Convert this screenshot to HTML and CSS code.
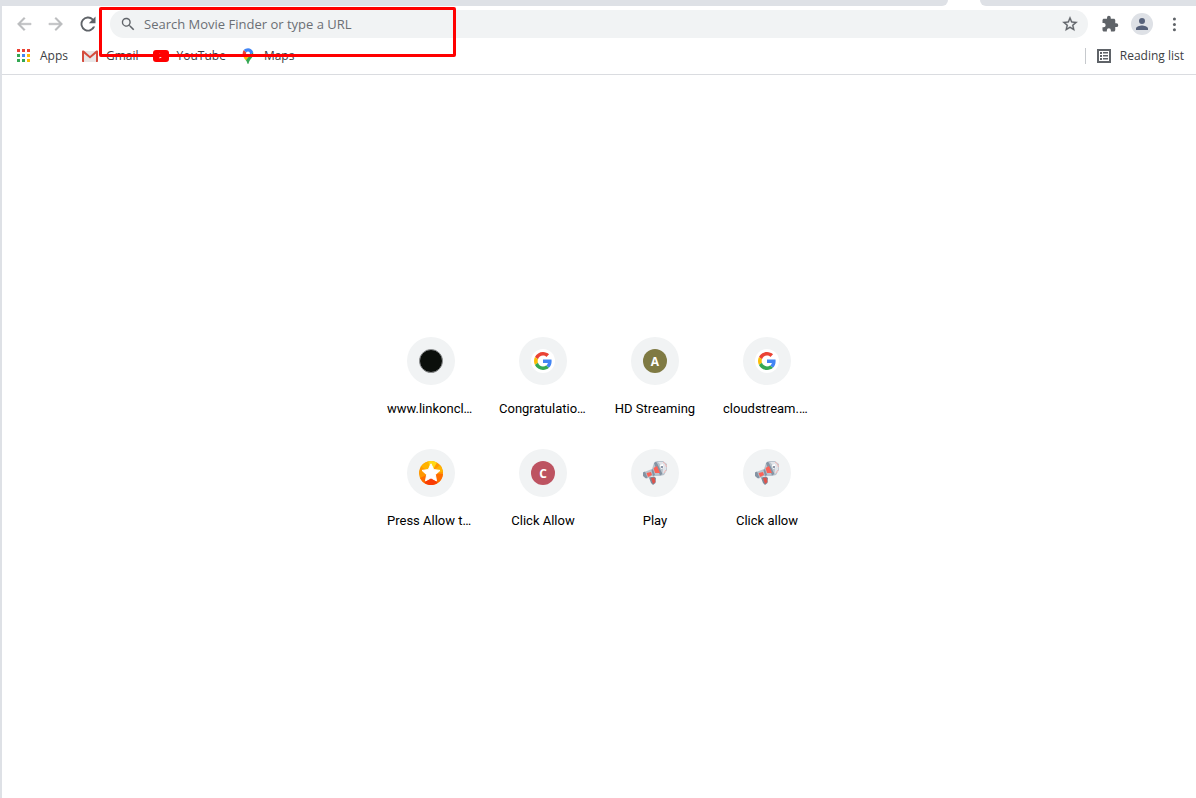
FILE: index.html
```html
<!DOCTYPE html>
<html lang="en">
<head>
<meta charset="utf-8">
<meta name="viewport" content="width=device-width, initial-scale=1">
<title>New Tab</title>
<link rel="stylesheet" href="styles.css">
</head>
<body>
<svg class="defs" aria-hidden="true">
  <symbol id="google" viewBox="0 0 48 48">
    <path fill="#ea4335" d="M24 9.5c3.54 0 6.71 1.22 9.21 3.6l6.85-6.85C35.9 2.38 30.47 0 24 0 14.62 0 6.51 5.38 2.56 13.22l7.98 6.19C12.43 13.72 17.74 9.5 24 9.5z"/>
    <path fill="#4285f4" d="M46.98 24.55c0-1.57-.15-3.09-.38-4.55H24v9.02h12.94c-.58 2.96-2.26 5.48-4.78 7.18l7.73 6c4.51-4.18 7.09-10.36 7.09-17.65z"/>
    <path fill="#fbbc05" d="M10.53 28.59c-.48-1.45-.76-2.99-.76-4.59s.27-3.14.76-4.59l-7.98-6.19C.92 16.46 0 20.12 0 24s.92 7.54 2.56 10.78l7.97-6.19z"/>
    <path fill="#34a853" d="M24 48c6.48 0 11.93-2.13 15.89-5.81l-7.73-6c-2.15 1.45-4.92 2.3-8.16 2.3-6.26 0-11.57-4.22-13.47-9.91l-7.98 6.19C6.51 42.62 14.62 48 24 48z"/>
  </symbol>
  <symbol id="megaphone" viewBox="0 0 24 24">
    <path fill="#b9c3cd" d="M0 11.500 9 8 11 2 14 0 20 0 24 3 24 9 21 14 17 15 9 15 4 17.500 1 16z"/>
    <path fill="#e1e4e9" d="M15 1 21 1 23.500 4 23 11 19.500 13 20 7z"/>
    <path fill="#8493a3" d="M11 2 13 .500 14.500 3 19.500 13 17 14.500 16 12 12 5zM0 11.500 2 10.500 4.500 16.500 3 17.500 0 15zM8.500 9 10 8 12 14 10 15z"/>
    <path fill="#fb6257" d="M10.500 7 14 5 17 12 12 12zM3.500 12 8 11 9 14 5 16z"/>
    <path fill="#7c8c9c" d="M6 16.500 11 15.500 13 17 12.500 22 10 24 8 22z"/>
    <path fill="#e0524a" d="M8 17 11.500 16.500 12.500 21 10 23z"/>
    <path fill="#fff" d="M17 4 20 3 20.500 7 18 8z"/>
    <path fill="none" stroke="#efb4b2" d="M20 1 22.500 3 23.500 6M21 12 23 9"/>
    <path fill="#8f98aa" d="M18 5h2v2h-2z"/>
  </symbol>
</svg>

<header class="chrome">
  <div class="tabstrip"><span class="tabs-before"></span><span class="tabs-after"></span></div>
  <div class="toolbar">
    <button class="tool disabled" aria-label="Back"><svg class="i20" viewBox="0 0 24 24"><path stroke="currentColor" stroke-width=".5" d="M20.500 11H7.830l5.590-5.590L12 4l-8 8 8 8 1.410-1.410L7.830 13H20.500z"/></svg></button>
    <button class="tool disabled" aria-label="Forward"><svg class="i20" viewBox="0 0 24 24"><path stroke="currentColor" stroke-width=".5" d="M12 4l-1.410 1.410L16.170 11H3.500v2h12.670l-5.580 5.590L12 20l8-8z"/></svg></button>
    <button class="tool" aria-label="Reload"><svg class="i20" viewBox="0 0 24 24"><path d="M18.400 5.600A9 9 0 1 0 20.600 15H18a6.700 6.700 0 1 1-1.300-7.700L13 11h8V3z"/></svg></button>
    <div class="omnibox">
      <svg class="i16" viewBox="0 0 24 24"><path d="M15.800 14.100h-.9l-.3-.3a6.800 6.800 0 1 0-.8.800l.3.300v.9l5.600 5.600 1.700-1.700zM9.400 14.100a4.700 4.700 0 1 1 0-9.400 4.700 4.700 0 0 1 0 9.400z"/></svg>
      <input class="query" type="text" aria-label="Address and search bar" placeholder="Search Movie Finder or type a URL">
      <button class="star" aria-label="Bookmark this tab"><svg class="i18" viewBox="0 0 24 24"><path stroke="currentColor" stroke-width=".4" d="M22 9.240l-7.190-.620L12 2 9.190 8.630 2 9.240l5.460 4.730L5.820 21 12 17.270 18.180 21l-1.630-7.030zM12 15.400l-3.760 2.270 1-4.280-3.320-2.880 4.380-.380L12 6.100l1.710 4.040 4.380.380-3.320 2.880 1 4.280z"/></svg></button>
    </div>
    <button class="tool" aria-label="Extensions"><svg class="i18" viewBox="0 0 24 24"><path d="M20.500 11H19V7c0-1.100-.9-2-2-2h-4V3.500a2.500 2.500 0 0 0-5 0V5H4c-1.100 0-2 .9-2 2v3.800h1.500a2.700 2.700 0 0 1 0 5.400H2V20c0 1.100.9 2 2 2h3.800v-1.500a2.700 2.700 0 0 1 5.400 0V22H17c1.100 0 2-.9 2-2v-4h1.500a2.500 2.500 0 0 0 0-5z"/></svg></button>
    <button class="tool" aria-label="Profile"><span class="avatar"><svg class="i18" viewBox="0 0 24 24"><path d="M12 12a4 4 0 1 0 0-8 4 4 0 0 0 0 8zm0 2c-2.670 0-8 1.340-8 4v2h16v-2c0-2.660-5.330-4-8-4z"/></svg></span></button>
    <button class="tool" aria-label="Menu"><svg class="i20" viewBox="0 0 24 24"><circle cx="12.500" cy="6" r="1.800"/><circle cx="12.500" cy="12.500" r="1.800"/><circle cx="12.500" cy="19" r="1.800"/></svg></button>
  </div>
  <nav class="bookmarks">
    <a class="bookmark" href="#"><svg class="i16" viewBox="0 0 16 16"><path fill="#ea4335" d="M1 1h3v3H1zM6 1h3v3H6zM11 1h3v3h-3z"/><path fill="#34a853" d="M1 6h3v3H1zM1 11h3v3H1z"/><path fill="#4285f4" d="M6 6h3v3H6z"/><path fill="#34a853" d="M6 11h3v3H6z"/><path fill="#fbbc05" d="M11 6h3v3h-3zM11 11h3v3h-3z"/></svg>Apps</a>
    <a class="bookmark" href="#"><svg class="i16" viewBox="0 0 16 16"><path fill="#e8e6e6" d="M1 3h14v11H1z"/><path fill="#d54b3d" d="M0 3.500C0 2.500 1 2 2 2.800L8 8l6-5.200c1-.8 2-.3 2 .7V13c0 .6-.4 1-1 1h-1V5.500L8 10.500 2 5.500V14H1c-.6 0-1-.4-1-1z"/></svg>Gmail</a>
    <a class="bookmark" href="#"><svg class="i16" viewBox="0 0 16 16"><rect y="2" width="16" height="12" rx="3" fill="#f00"/><path fill="#fff" d="M6.500 5.500v5L10.500 8z"/></svg>YouTube</a>
    <a class="bookmark" href="#"><svg class="i16" viewBox="0 0 16 16"><path fill="#34a853" d="M13 4c.8 3-.5 5-2 6.800C9.500 12.500 9 14 8.600 15.500c-.2.600-1 .6-1.200 0C7 14 6.500 13 5.700 12z"/><path fill="#fbbc04" d="M3.400 8.500 6.400 5l3.300 2.500-4 4.700C4.600 11 3.900 10 3.400 8.500z"/><path fill="#ea4335" d="M3.800 2 7 4.700 3.400 8.700C2.300 6.500 2.400 4 3.800 2z"/><path fill="#4285f4" d="M3.800 2C6-.5 11.500-1 13.300 4.200L9.500 7.600 6.500 4.500z"/><circle cx="8" cy="5.500" r="2" fill="#fff"/></svg>Maps</a>
    <a class="bookmark reading" href="#"><svg class="i16" viewBox="0 0 16 16"><path fill="#5f6368" fill-rule="evenodd" d="M1 1h14v14H1zM3 3v10h10V3zM4 4h2v2H4zM7 4h5v1.500H7zM4 7h2v2H4zM7 7h5v1.500H7zM4 10h2v2H4zM7 10h5v1.500H7z"/></svg>Reading list</a>
  </nav>
  <div class="highlight"></div>
</header>

<main class="page">
  <div class="tiles">
    <a class="tile" href="#"><span class="disc"><span class="fav black"></span></span><span class="name long">www.linkoncl…</span></a>
    <a class="tile" href="#"><span class="disc"><span class="fav white"><svg class="i18" aria-hidden="true"><use href="#google"/></svg></span></span><span class="name long">Congratulatio…</span></a>
    <a class="tile" href="#"><span class="disc"><span class="fav olive">A</span></span><span class="name">HD Streaming</span></a>
    <a class="tile" href="#"><span class="disc"><span class="fav white"><svg class="i18" aria-hidden="true"><use href="#google"/></svg></span></span><span class="name long">cloudstream.…</span></a>
    <a class="tile" href="#"><span class="disc"><svg class="i24" viewBox="0 0 24 24"><circle cx="12" cy="12" r="12" fill="#ff9800"/><path fill="#ffd814" d="M12 12 9 .4A12 12 0 0 1 18 1.600z"/><path fill="#ffb300" d="M12 12 2 5.400A12 12 0 0 1 9 .4zM12 12 21 4A12 12 0 0 1 24 11z"/><path fill="#ff6d00" d="M12 12 24 13A12 12 0 0 1 17 23zM12 12 1 17A12 12 0 0 0 7 23z"/><path fill="#f93c05" d="M12 12 5.500 22.100A12 12 0 0 0 18.500 22.100z"/><path fill="#fff" stroke="#fff" stroke-linejoin="round" d="M12 2.800l2.700 5.800 6.300.8-4.600 4.300 1.100 6.200-5.500-3-5.500 3 1.100-6.200L3 9.400l6.300-.8z"/></svg></span><span class="name long">Press Allow t…</span></a>
    <a class="tile" href="#"><span class="disc"><span class="fav rose">C</span></span><span class="name">Click Allow</span></a>
    <a class="tile" href="#"><span class="disc"><svg class="i24"><use href="#megaphone"/></svg></span><span class="name">Play</span></a>
    <a class="tile" href="#"><span class="disc"><svg class="i24"><use href="#megaphone"/></svg></span><span class="name">Click allow</span></a>
  </div>
</main>
</body>
</html>
```
FILE: styles.css
```css
* { box-sizing: border-box; }
body {
  margin: 0;
  min-height: 100vh;
  border-left: 2px solid #dee1e6;
  background: #fff;
  color: #202124;
  font-family: "Open Sans", "Noto Sans", sans-serif;
}
a { color: inherit; text-decoration: none; }
button { border: 0; padding: 0; background: none; color: inherit; font: inherit; }
svg { display: block; flex: none; fill: currentColor; }
.defs { display: none; }
.i16 { width: 16px; height: 16px; }
.i18 { width: 18px; height: 18px; }
.i20 { width: 20px; height: 20px; }
.i24 { width: 24px; height: 24px; }

.chrome { position: relative; border-bottom: 1px solid #dadce0; }
.tabstrip { display: flex; gap: 32px; height: 6px; }
.tabs-before { flex: 1; background: #dee1e6; border-bottom-right-radius: 6px; }
.tabs-after { width: 216px; background: #dee1e6; border-bottom-left-radius: 6px; }

.toolbar { display: flex; align-items: center; gap: 4px; padding: 4px 8px; color: #5f6368; }
.tool { display: flex; align-items: center; justify-content: center; width: 28px; height: 28px; }
.disabled { color: #babcbe; }
.omnibox {
  display: flex;
  flex: 1;
  align-items: center;
  gap: 8px;
  height: 28px;
  margin: 0 4px;
  padding: 0 9px 0 10px;
  border-radius: 14px;
  background: #f1f3f4;
}
.query {
  flex: 1;
  min-width: 0;
  padding: 0;
  border: 0;
  outline: 0;
  background: none;
  color: #202124;
  font: 13px/20px "Open Sans", "Noto Sans", sans-serif;
}
.query::placeholder { color: #6b6f74; opacity: 1; }
.avatar {
  display: flex;
  align-items: center;
  justify-content: center;
  width: 22px;
  height: 22px;
  border-radius: 50%;
  background: #dee1e6;
  color: #56617a;
}

.bookmarks {
  display: flex;
  align-items: center;
  gap: 14px;
  height: 32px;
  padding: 0 12px 4px 14px;
  font-size: 12px;
  line-height: 16px;
  color: #3c4043;
}
.bookmark { display: flex; align-items: center; gap: 8px; white-space: nowrap; }
.reading { margin-left: auto; padding-left: 10px; border-left: 1px solid #c6c9cd; }
.highlight {
  position: absolute;
  top: 7px;
  left: 97px;
  width: 357px;
  height: 50px;
  border: 3px solid #f00;
  border-radius: 2px;
}

.page { display: flex; justify-content: center; padding-top: 246px; }
.tiles { display: grid; grid-template-columns: repeat(4, 112px); grid-auto-rows: 112px; }
.tile { display: flex; flex-direction: column; align-items: center; gap: 16px; padding: 16px 12px 0; }
.disc {
  display: flex;
  align-items: center;
  justify-content: center;
  width: 48px;
  height: 48px;
  border-radius: 50%;
  background: #f1f3f4;
}
.fav {
  display: flex;
  align-items: center;
  justify-content: center;
  width: 24px;
  height: 24px;
  border-radius: 50%;
  color: #fff;
  font-size: 12px;
  font-weight: 700;
}
.black { background: #0b0f0b; border: 1px solid #8e9092; }
.white { background: #fff; }
.olive { background: #7f7a43; }
.rose { background: #bd5361; }
.name {
  white-space: nowrap;
  color: #000;
  font: 13px/16px Roboto, sans-serif;
}
.long { width: 100%; }
```
